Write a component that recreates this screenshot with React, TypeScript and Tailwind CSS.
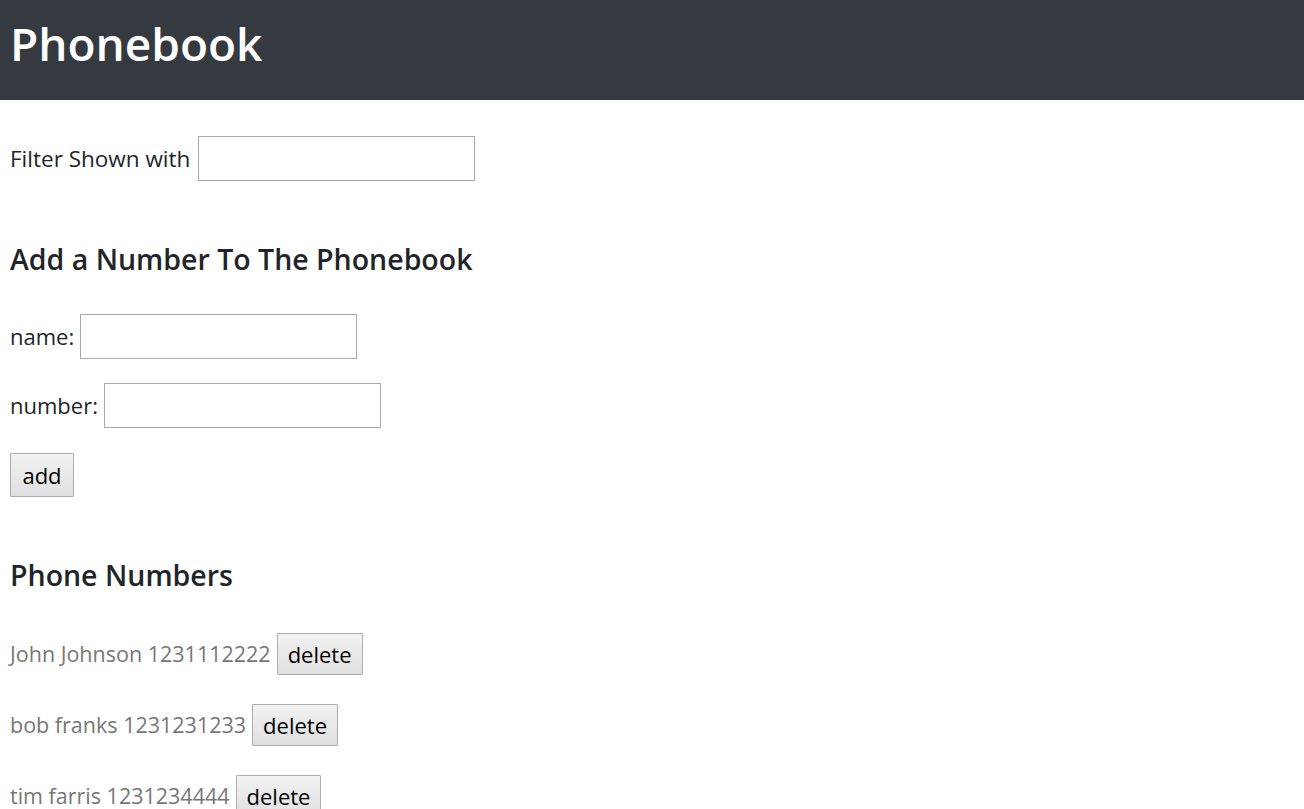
import React, { useState } from 'react';

type Person = { name: string; number: string };

const initialPersons: Person[] = [
  { name: 'John Johnson', number: '1231112222' },
  { name: 'bob franks', number: '1231231233' },
  { name: 'tim farris', number: '1231234444' },
];

const font = { fontFamily: '"Open Sans", "Noto Sans", sans-serif' };

const TextInput: React.FC<{ value: string; onChange: (v: string) => void }> = ({ value, onChange }) => (
  <input
    value={value}
    onChange={(e) => onChange(e.target.value)}
    className="w-[277px] h-[45px] border border-[#a9a9a9] bg-white px-1 text-[20px] outline-none"
  />
);

const GreyButton: React.FC<{ children: React.ReactNode; className?: string }> = ({ children, className = '' }) => (
  <button
    className={`h-[42px] px-[10px] border border-[#adadad] rounded-[1px] bg-gradient-to-b from-[#f2f2f2] to-[#e0e0e0] text-[22px] leading-none text-black ${className}`}
  >
    {children}
  </button>
);

export default function App() {
  const [persons] = useState<Person[]>(initialPersons);
  const [filter, setFilter] = useState('');
  const [newName, setNewName] = useState('');
  const [newNumber, setNewNumber] = useState('');

  return (
    <div className="min-h-screen bg-white text-[#212529]" style={font}>
      <header className="h-[100px] bg-[#343a40] px-[10px] flex items-center">
        <h1 className="text-white text-[46px] font-semibold leading-none pb-[14px]">Phonebook</h1>
      </header>

      <div className="px-[10px]">
        <div className="flex items-center gap-[8px] mt-[36px] text-[22.5px]">
          <span>Filter Shown with</span>
          <TextInput value={filter} onChange={setFilter} />
        </div>

        <h2 className="mt-[64px] text-[28.5px] font-semibold leading-none">Add a Number To The Phonebook</h2>

        <div className="flex items-center gap-[6px] mt-[40px] text-[22px]">
          <span>name:</span>
          <TextInput value={newName} onChange={setNewName} />
        </div>
        <div className="flex items-center gap-[6px] mt-[24px] text-[22px]">
          <span>number:</span>
          <TextInput value={newNumber} onChange={setNewNumber} />
        </div>
        <GreyButton className="mt-[25px] h-[44px] w-[64px]">add</GreyButton>

        <h2 className="mt-[64px] text-[28.5px] font-semibold leading-none">Phone Numbers</h2>

        <div className="mt-[44px] flex flex-col gap-[29px]">
          {persons
            .filter((p) => p.name.toLowerCase().includes(filter.toLowerCase()))
            .map((p) => (
              <div key={p.name} className="flex items-center gap-[6px] text-[21.5px] text-[#777]">
                <span>
                  {p.name} {p.number}
                </span>
                <GreyButton>delete</GreyButton>
              </div>
            ))}
        </div>
      </div>
    </div>
  );
}
